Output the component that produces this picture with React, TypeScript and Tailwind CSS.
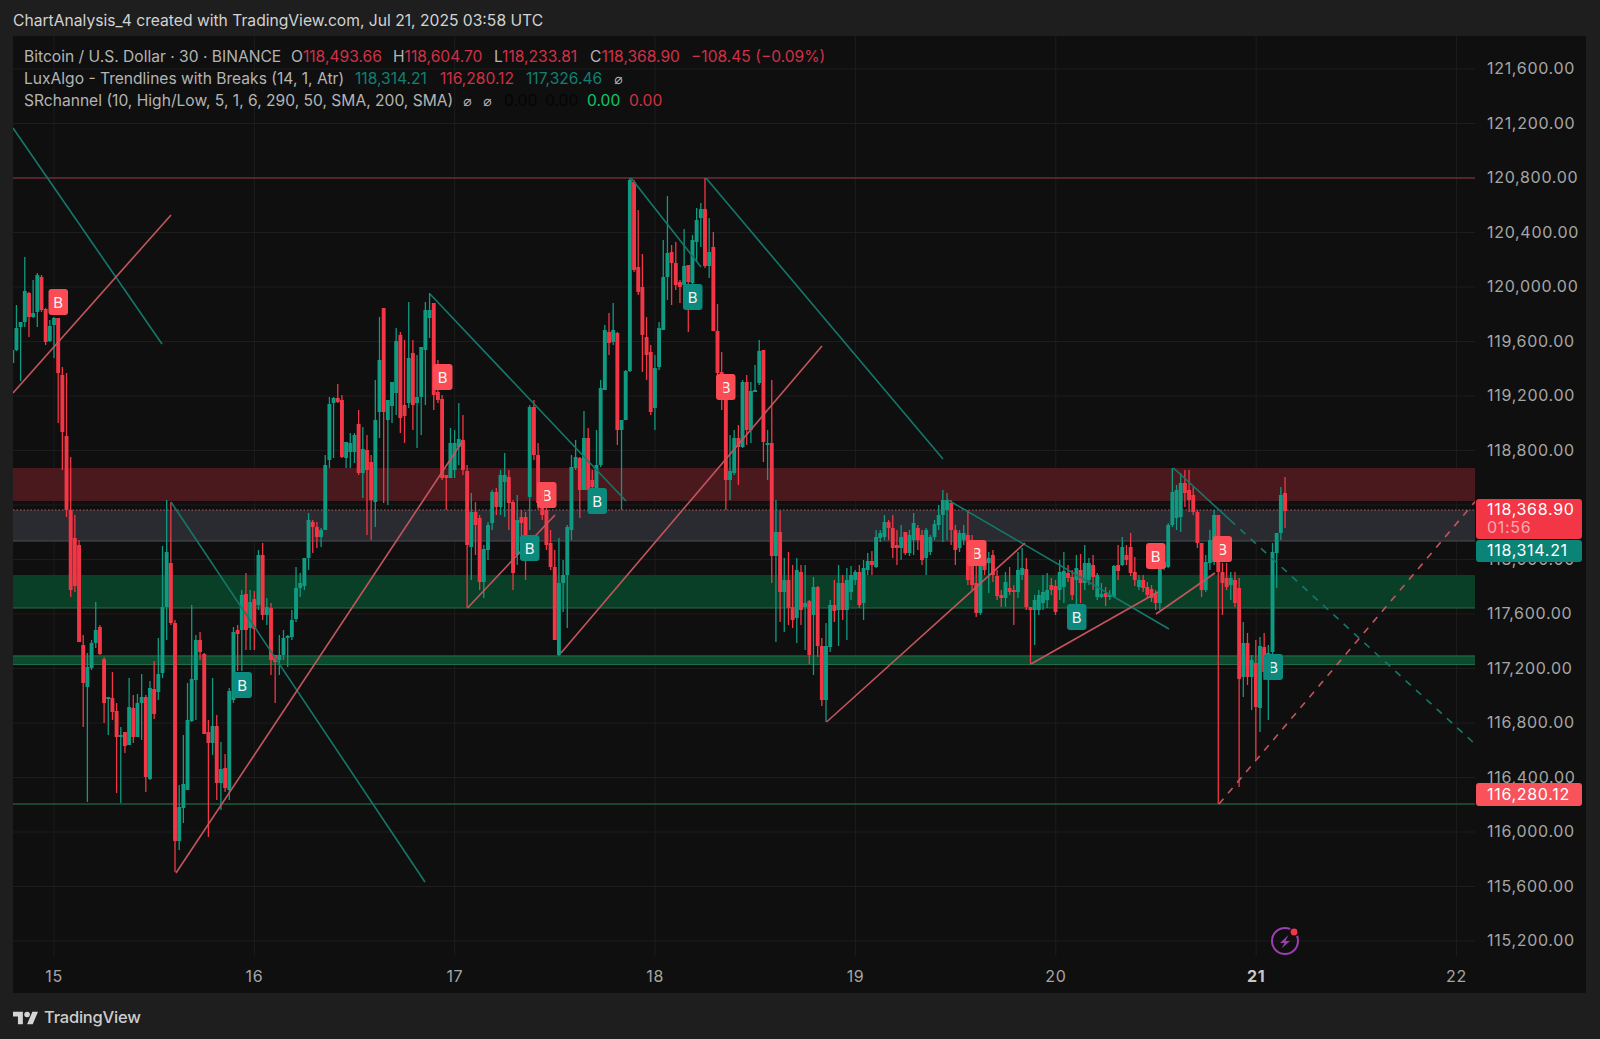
import React from "react";

const g = 1, r = 0;
// [color, bodyTop, bodyBottom, wickTop, wickBottom] starting at candle index -10, spaced one 30-minute bar apart
const candles: number[][] = [
[g,350,363,345,365],[g,328,350,305,351],[g,322,327,322,381],[g,291,322,257,327],[r,293,317,292,337],[g,313,317,280,318],[g,275,312,273,327],[r,277,310,275,312],[r,309,342,308,345],[g,326,341,320,342],
[g,318,325,317,358],[r,318,373,318,423],[r,375,432,367,470],[r,436,510,373,517],[r,510,590,457,597],[r,538,586,515,592],[r,545,642,540,642],[r,645,683,635,727],[g,667,687,653,802],[g,643,668,640,670],
[g,630,643,602,648],[r,627,654,625,655],[r,659,703,657,723],[g,697,699,697,735],[r,698,712,672,720],[r,711,737,703,793],[g,735,737,727,803],[r,732,746,732,753],[g,707,745,678,745],[r,708,737,695,743],
[g,703,737,694,737],[g,697,703,674,740],[r,697,777,695,792],[g,688,779,681,780],[r,689,714,661,719],[g,674,692,638,700],[g,607,673,546,678],[g,552,607,500,640],[r,563,623,502,625],[r,623,841,620,872],
[g,807,841,785,850],[g,784,808,735,823],[g,720,790,683,790],[g,679,721,605,722],[g,640,680,635,720],[r,640,652,632,660],[r,654,734,653,734],[r,732,743,720,837],[g,726,743,678,755],[r,726,783,715,800],
[g,769,783,742,810],[r,768,788,754,792],[g,691,790,688,800],[g,632,700,627,703],[r,630,634,625,671],[g,595,630,590,671],[r,594,630,573,650],[g,602,628,590,650],[r,599,629,591,650],[g,555,605,550,610],
[r,555,615,543,620],[g,607,615,598,625],[r,608,660,603,675],[r,655,662,655,703],[g,655,660,635,675],[g,638,655,630,660],[g,636,638,635,667],[g,620,637,610,640],[g,588,619,567,622],[g,583,588,573,597],
[g,558,586,558,590],[g,520,558,513,570],[r,522,527,520,553],[r,527,537,522,548],[g,530,537,528,547],[g,465,530,455,530],[g,404,460,397,468],[g,398,403,397,458],[r,398,402,384,403],[r,400,457,395,458],
[g,442,458,442,468],[g,443,452,433,468],[g,435,452,433,463],[r,424,473,410,475],[g,449,473,427,498],[r,450,470,435,535],[r,462,500,455,540],[g,420,502,380,527],[g,360,412,317,438],[r,308,412,308,503],
[g,400,420,400,505],[g,382,406,382,423],[g,341,393,328,415],[r,335,418,332,433],[r,405,416,340,443],[g,358,403,302,408],[r,353,405,340,430],[g,397,403,355,448],[g,347,397,347,435],[g,310,350,302,405],
[g,310,318,293,338],[r,303,395,303,410],[r,392,400,360,403],[r,399,478,395,480],[r,475,478,475,510],[g,443,478,428,478],[g,443,470,430,478],[g,439,447,403,465],[r,440,470,415,475],[r,471,545,465,608],
[g,512,547,493,580],[r,512,525,502,555],[r,518,582,515,590],[g,549,582,545,598],[g,525,550,522,560],[g,492,523,490,530],[r,492,507,488,515],[g,475,507,470,515],[g,475,482,453,517],[r,477,503,470,530],
[r,502,573,500,590],[g,520,555,495,565],[r,517,523,510,550],[r,517,560,512,580],[g,407,497,405,530],[r,407,455,400,460],[r,455,503,443,510],[r,495,515,490,520],[r,510,545,505,550],[r,543,567,530,570],
[r,567,640,550,640],[g,583,655,538,656],[g,575,583,560,612],[g,527,575,525,628],[g,467,530,455,540],[g,457,468,440,470],[r,458,490,457,518],[g,438,490,411,490],[r,438,490,428,490],[r,480,487,470,490],
[g,465,488,430,500],[g,388,465,380,467],[g,330,390,325,390],[r,332,343,313,355],[g,330,342,303,345],[r,333,430,332,445],[g,420,430,425,510],[g,371,420,370,420],[g,180,371,178,372],[r,182,270,180,272],
[r,267,292,210,295],[r,287,335,254,372],[r,337,355,317,380],[r,352,412,345,415],[g,368,408,355,430],[g,328,367,322,370],[g,277,330,240,330],[g,253,277,196,300],[r,252,263,245,305],[r,263,285,242,290],
[r,282,287,280,303],[g,266,285,229,292],[r,265,282,265,332],[g,240,283,235,286],[g,220,242,208,262],[g,209,218,203,247],[r,209,266,178,268],[g,252,266,218,278],[r,247,331,232,331],[r,331,373,304,380],
[r,372,400,352,410],[r,400,480,398,510],[g,471,480,435,500],[g,438,473,430,475],[r,438,447,425,485],[g,382,447,380,448],[r,382,430,375,445],[g,391,430,382,443],[g,390,392,365,392],[g,351,383,340,385],
[r,350,442,350,462],[g,443,445,430,480],[r,443,556,380,583],[g,532,556,500,642],[r,532,592,511,622],[g,580,592,558,632],[r,580,608,552,625],[r,607,620,565,628],[g,570,618,558,643],[r,572,610,565,625],
[g,603,607,565,650],[r,601,655,600,664],[g,587,615,577,675],[r,587,646,586,657],[r,646,700,638,706],[g,646,700,623,722],[g,605,647,600,652],[r,605,611,580,622],[g,583,610,565,646],[r,583,610,575,620],
[g,580,610,568,640],[g,575,592,566,600],[g,572,580,570,585],[r,572,605,565,608],[g,568,603,560,620],[g,561,570,553,575],[r,561,565,551,575],[g,537,567,530,568],[g,533,538,530,542],[g,522,537,515,540],
[r,522,528,520,540],[r,528,548,515,558],[r,545,548,530,565],[g,537,548,525,560],[r,532,553,532,555],[g,535,553,530,556],[g,523,540,513,555],[r,528,540,525,550],[r,535,560,530,565],[g,530,558,528,575],
[g,537,552,535,555],[g,524,537,520,540],[g,515,525,505,530],[g,500,515,490,542],[g,500,510,493,540],[r,503,530,500,545],[r,530,550,525,565],[g,533,548,530,552],[g,533,540,525,545],[r,535,580,510,585],
[r,540,585,535,590],[r,583,613,560,617],[g,560,613,555,615],[r,560,570,552,575],[g,558,563,552,593],[r,555,575,550,582],[r,576,596,570,600],[r,595,598,590,607],[g,582,598,572,607],[r,588,592,567,595],
[r,590,592,585,625],[g,570,592,552,598],[g,568,575,548,580],[r,569,607,558,610],[r,607,610,607,664],[g,600,610,595,645],[g,595,610,590,615],[g,592,603,575,610],[g,590,600,573,608],[r,585,590,578,595],
[r,586,612,580,615],[g,572,590,560,600],[g,571,587,552,603],[r,573,578,565,582],[r,577,595,570,600],[g,568,580,555,605],[r,570,583,554,603],[g,563,583,545,590],[g,563,580,558,585],[r,565,577,555,590],
[g,575,597,573,600],[g,594,597,583,598],[r,593,597,587,606],[g,595,597,590,600],[g,566,597,565,598],[r,565,571,545,580],[g,547,565,537,566],[r,555,560,545,565],[r,547,573,533,576],[r,572,580,557,586],
[g,580,587,575,590],[r,580,588,575,592],[r,587,595,582,598],[r,589,598,585,602],[r,593,603,590,610],[g,567,603,565,610],[g,562,568,558,570],[g,525,567,523,568],[g,492,525,468,527],[g,490,518,485,530],
[g,483,517,473,532],[r,483,493,470,507],[r,490,500,470,512],[r,495,512,487,515],[r,512,543,510,548],[r,543,590,543,597],[g,562,590,555,592],[g,540,563,530,570],[g,515,562,510,565],[r,515,572,515,804],
[r,572,583,563,615],[r,578,587,563,590],[g,578,585,572,600],[r,580,603,572,607],[r,588,679,578,787],[g,643,677,622,697],[r,643,677,633,685],[g,660,677,655,710],[r,663,707,640,760],[g,646,708,637,732],
[r,647,672,633,680],[g,653,680,645,720],[g,552,652,543,655],[g,533,553,533,588],[g,495,533,487,540],[r,493,511,477,528],
];

const gridY = Array.from({ length: 17 }, (_, i) => 69 + i * 54.5);
const gridX = Array.from({ length: 8 }, (_, i) => 54 + i * 200.35);
const prices = ["121,600.00","121,200.00","120,800.00","120,400.00","120,000.00","119,600.00","119,200.00","118,800.00","","118,000.00","117,600.00","117,200.00","116,800.00","116,400.00","116,000.00","115,600.00","115,200.00"];

type Flag = { x: number; y: number; red: boolean; stem?: boolean };
const flags: Flag[] = [
  { x: 48.5, y: 289, red: true },
  { x: 433, y: 364, red: true },
  { x: 232.5, y: 672, red: false },
  { x: 537, y: 482, red: true, stem: true },
  { x: 520, y: 535, red: false },
  { x: 587.5, y: 488, red: false },
  { x: 683, y: 284, red: false },
  { x: 716, y: 374, red: true, stem: true },
  { x: 967, y: 540, red: true, stem: true },
  { x: 1067, y: 604, red: false },
  { x: 1146, y: 543, red: true },
  { x: 1212.5, y: 536, red: true, stem: true },
  { x: 1263.5, y: 654, red: false, stem: true },
];

const teal = "#14786b";
const salmon = "#c4555d";
const tealLines = [[13, 128, 162, 344], [171, 502, 425, 882], [430, 294, 626, 501], [631, 178, 701, 267], [706, 178, 943, 459], [948, 500, 1169, 629], [1173.5, 468, 1230, 520]];
const salmonLines = [[13, 393, 171, 215], [176, 873, 462, 442], [467.5, 608, 555, 515], [561, 653, 822, 346], [826.5, 722, 1025, 543], [1031, 664, 1158, 592], [1156, 614, 1215, 573]];

function Chart() {
  return (
    <svg className="block" width={1462} height={920} viewBox="13 36 1462 920">
      {gridX.map((x) => <line key={x} x1={x} x2={x} y1={36} y2={956} stroke="#1d1d1d" strokeWidth={1} />)}
      {gridY.map((y) => <line key={y} x1={13} x2={1475} y1={y} y2={y} stroke="#1d1d1d" strokeWidth={1} />)}
      <rect x={13} y={468} width={1462} height={33} fill="#4a191e" />
      <rect x={13} y={510} width={1462} height={31} fill="#2a2b30" />
      <line x1={13} x2={1475} y1={541} y2={541} stroke="#4d4e54" />
      <rect x={13} y={575} width={1462} height={33} fill="#0a3f27" />
      <line x1={13} x2={1475} y1={608} y2={608} stroke="#2a6b47" />
      <rect x={13} y={655.5} width={1462} height={9} fill="#0e4a2f" />
      <line x1={13} x2={1475} y1={656} y2={656} stroke="#1f6e45" />
      <line x1={13} x2={1475} y1={664.5} y2={664.5} stroke="#1f6e45" />
      <line x1={13} x2={1475} y1={804} y2={804} stroke="#1d5a3a" strokeWidth={1.7} />
      <line x1={13} x2={1475} y1={178} y2={178} stroke="#6a2c34" strokeWidth={1.5} />
      <line x1={13} x2={1475} y1={510} y2={510} stroke="#c2545f" strokeDasharray="1.5 2" />
      {candles.map((c, i) => {
        const x = 54 + (i - 10) * 4.173;
        const col = c[0] === g ? "#0f9a82" : "#f23645";
        return (
          <g key={i}>
            <line x1={x} x2={x} y1={c[3]} y2={c[4]} stroke={col} strokeWidth={1.3} />
            <rect x={x - 1.95} y={c[1]} width={3.9} height={c[2] - c[1]} fill={col} />
          </g>
        );
      })}
      {tealLines.map((l, i) => <line key={i} x1={l[0]} y1={l[1]} x2={l[2]} y2={l[3]} stroke={teal} strokeWidth={1.6} />)}
      {salmonLines.map((l, i) => <line key={i} x1={l[0]} y1={l[1]} x2={l[2]} y2={l[3]} stroke={salmon} strokeWidth={1.6} />)}
      <line x1={1230} y1={520} x2={1475} y2={744} stroke={teal} strokeWidth={1.6} strokeDasharray="7 7" />
      <line x1={1219} y1={804} x2={1475} y2={501.7} stroke={salmon} strokeWidth={1.6} strokeDasharray="7 7" />
      {flags.map((f, i) => {
        const col = f.red ? "#fb4c55" : "#0b8a7d";
        return (
          <g key={i}>
            <rect x={f.x} y={f.y} width={19.5} height={26} rx={3} fill={col} />
            <text x={f.x + 9.75} y={f.y + 18.5} textAnchor="middle" fontSize={15} fontFamily="Inter, sans-serif" fill="#f4f4f4">B</text>
            {f.stem && <line x1={f.x + 6.3} x2={f.x + 6.3} y1={f.y + 5} y2={f.y + 21} stroke={col} strokeWidth={2.2} />}
          </g>
        );
      })}
      <circle cx={1285} cy={941} r={13} fill="none" stroke="#9b3fb0" strokeWidth={2} />
      <polygon points="1288.5,935 1280,943 1284.5,943 1281.5,948.5 1290,941 1285.5,941" fill="#9b3fb0" />
      <circle cx={1294} cy={932} r={5} fill="#0f0f0f" />
      <circle cx={1294} cy={932} r={3.4} fill="#f23645" />
    </svg>
  );
}

function Legend() {
  const red = "text-[#cf3146]";
  const tl = "text-[#0f8072]";
  return (
    <div className="absolute left-[11px] top-[10px] text-[15.6px] leading-[22px] whitespace-nowrap font-['Inter',sans-serif] text-[#b4b4b4]">
      <div className="flex">
        <span className="w-[267px]">Bitcoin / U.S. Dollar · 30 · BINANCE</span>
        <span className="w-[102px]">O<span className={red}>118,493.66</span></span>
        <span className="w-[101px]">H<span className={red}>118,604.70</span></span>
        <span className="w-[96px]">L<span className={red}>118,233.81</span></span>
        <span className="w-[101px]">C<span className={red}>118,368.90</span></span>
        <span className={red}>−108.45 (−0.09%)</span>
      </div>
      <div className="flex">
        <span className="w-[331px]">LuxAlgo - Trendlines with Breaks (14, 1, Atr)</span>
        <span className={`w-[85px] ${tl}`}>118,314.21</span>
        <span className={`w-[86px] ${red}`}>116,280.12</span>
        <span className={`w-[88px] ${tl}`}>117,326.46</span>
        <span className="font-['DejaVu_Sans',sans-serif] text-[14px]">⌀</span>
      </div>
      <div className="flex">
        <span className="w-[439px]">SRchannel (10, High/Low, 5, 1, 6, 290, 50, SMA, 200, SMA)</span>
        <span className="w-[20px] font-['DejaVu_Sans',sans-serif] text-[14px]">⌀</span>
        <span className="w-[21px] font-['DejaVu_Sans',sans-serif] text-[14px]">⌀</span>
        <span className="w-[41px] text-[#050505]">0.00</span>
        <span className="w-[42px] text-[#050505]">0.00</span>
        <span className="w-[42px] text-[#0ac96a]">0.00</span>
        <span className={red}>0.00</span>
      </div>
    </div>
  );
}

function Logo() {
  return (
    <svg width={25} height={14} viewBox="0 4 35.5 18" fill="#d4d4d4">
      <path d="M14 22H7V11H0V4h14v18zM28 22h-8l7.5-18h8L28 22z" />
      <circle cx={20} cy={8} r={4} />
    </svg>
  );
}

export default function App() {
  return (
    <div className="w-[1600px] h-[1039px] bg-[#1e1e1e] flex flex-col overflow-hidden font-['Inter',sans-serif]">
      <div className="h-[36px] pl-[13px] pt-[5px] flex items-center text-[15.65px] text-[#d2d2d2] whitespace-nowrap">
        ChartAnalysis_4 created with TradingView.com, Jul 21, 2025 03:58 UTC
      </div>
      <div className="ml-[13px] w-[1573px] h-[957px] bg-[#0f0f0f] flex">
        <div className="w-[1462px] flex flex-col">
          <div className="relative h-[920px]">
            <Chart />
            <Legend />
          </div>
          <div className="h-[37px] pt-[3px] flex items-center -ml-[59px] overflow-hidden text-[16px] tracking-[0.7px] text-[#a6a6a6]">
            {["15", "16", "17", "18", "19", "20", "21", "22"].map((d) => (
              <div key={d} className={`w-[200.35px] shrink-0 text-center ${d === "21" ? "font-bold text-[#c8c8c8]" : ""}`}>{d}</div>
            ))}
          </div>
        </div>
        <div className="relative w-[111px] pt-[4.75px] text-[16px] text-[#a6a6a6] tracking-[0.7px]">
          {prices.map((p, i) => (
            <div key={i} className="h-[54.5px] flex items-center pl-[12px]">{p}</div>
          ))}
          <div className="absolute left-[0.5px] top-[463px] w-[106px] h-[40px] rounded-[3px] bg-[#f23645] pl-[11.5px] pt-[1px] leading-[18px] text-white">
            <div>118,368.90</div>
            <div className="text-[#f7a8b0]">01:56</div>
          </div>
          <div className="absolute left-[0.5px] top-[504px] w-[106px] h-[22px] rounded-[3px] bg-[#0b8478] pl-[11.5px] leading-[21px] text-white">118,314.21</div>
          <div className="absolute left-[0.5px] top-[747px] w-[106px] h-[23px] rounded-[3px] bg-[#f8525a] pl-[11.5px] leading-[22px] text-white">116,280.12</div>
        </div>
      </div>
      <div className="flex-1 pl-[13px] pt-[3px] flex items-center gap-[6px]">
        <Logo />
        <span className="text-[16.5px] font-medium text-[#cdcdcd] tracking-[-0.2px]">TradingView</span>
      </div>
    </div>
  );
}
